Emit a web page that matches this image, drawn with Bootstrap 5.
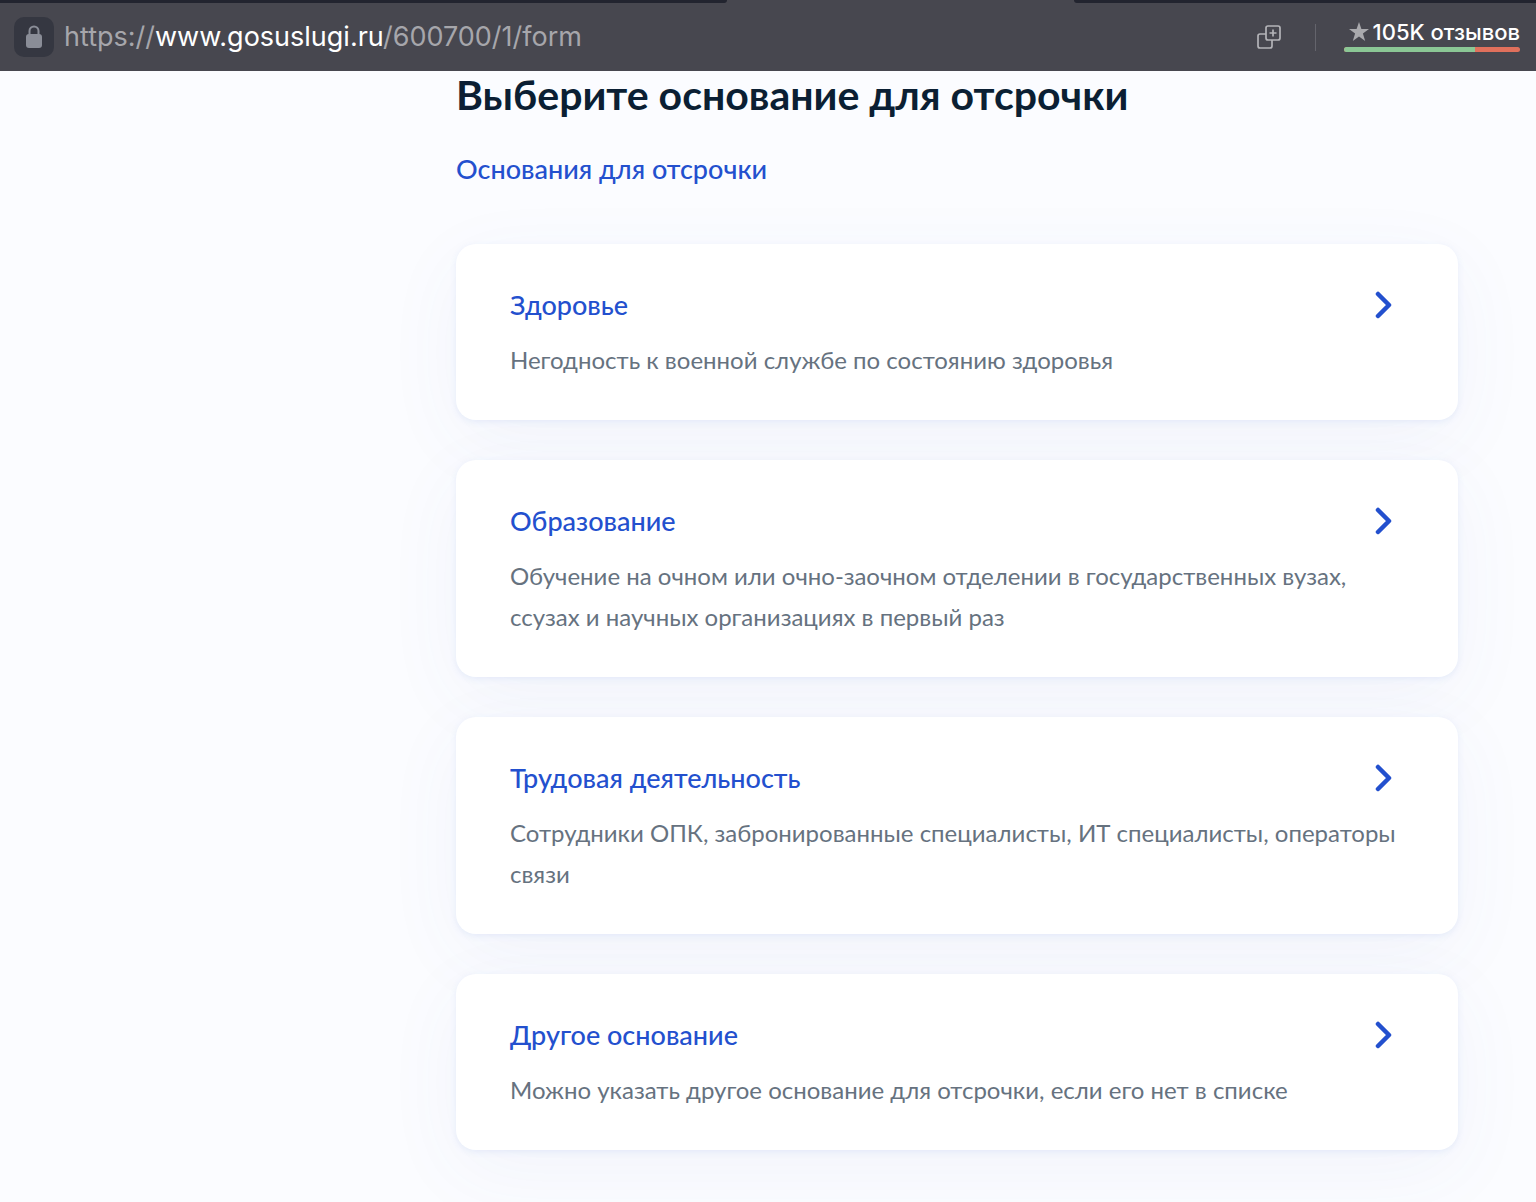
<!DOCTYPE html>
<html lang="ru">
<head>
<meta charset="utf-8">
<meta name="viewport" content="width=device-width, initial-scale=1">
<title>Выберите основание для отсрочки</title>
<link href="https://cdn.jsdelivr.net/npm/bootstrap@5.3.0/dist/css/bootstrap.min.css" rel="stylesheet">
<style>
  body { background: #fbfcff; font-family: Lato, "Open Sans", sans-serif; color: #0b1f33; min-height: 100vh; }
  .browser-bar { background: #47474f; height: 71px; font-family: Inter, Roboto, sans-serif; }
  .tab-edge { background: #22242f; height: 3px; }
  .tab-left { width: 47.3%; border-bottom-right-radius: 4px; }
  .tab-right { width: 30.1%; border-bottom-left-radius: 4px; }
  .bar-row { padding: 0 16px 0 14px; }
  .lock-btn { width: 40px; height: 40px; background: #353741; border-radius: 10px; }
  .address { font-size: 27px; line-height: 32px; color: #a6a6ab; margin-left: 10px; }
  .address b { font-weight: 400; color: #fff; }
  .divider-line { width: 1px; height: 27px; background: #64646c; margin: 0 28px 0 33px; }
  .reviews { width: 176px; color: #fff; font-size: 22px; line-height: 28px; font-weight: 500; padding-bottom: 5px; }
  .rating { height: 5px; border-radius: 3px; background: #e0705c; margin-top: 1px; }
  .rating .progress-bar { background: #8bc795; }
  .form-page { padding: 0 78px 51px 456px; }
  h1 { font-size: 41px; line-height: 48px; font-weight: 700; }
  .blue { color: #2350ce; }
  .item-title, .hint-link { font-size: 27px; line-height: 41px; font-weight: 500; }
  .hint-link { margin-top: 29px; }
  .reason { border-radius: 20px; padding: 40px 54px; color: #66727f; gap: 14px;
    box-shadow: 0 2px 7px rgba(55,100,215,.09), 0 20px 80px rgba(70,100,180,.05); }
  .reason-text { font-size: 24px; line-height: 41px; }
  .reasons { gap: 40px; margin-top: 55px; }
  .chevron { margin-right: 11px; }
  @media (max-width: 1100px) { .form-page { padding-left: 32px; padding-right: 32px; } }
</style>
</head>
<body>
<header class="browser-bar d-flex flex-column">
  <div class="d-flex justify-content-between">
    <div class="tab-edge tab-left"></div><div class="tab-edge tab-right"></div>
  </div>
  <div class="bar-row d-flex align-items-center flex-grow-1">
    <button type="button" class="lock-btn btn border-0 p-0 d-flex align-items-center justify-content-center" aria-label="Сведения о сайте">
      <svg width="18" height="24" viewBox="0 0 18 24"><rect x="1" y="9" width="16" height="14" rx="3" fill="#8a8d97"/><path d="M4.500 10V6a4.500 4.500 0 0 1 9 0v4" fill="none" stroke="#8a8d97" stroke-width="2"/></svg>
    </button>
    <a class="address text-decoration-none" href="#">https://<b>www.gosuslugi.ru</b>/600700/1/form</a>
    <button type="button" class="btn border-0 p-0 ms-auto d-flex" aria-label="Добавить">
      <svg width="26" height="26" viewBox="0 0 26 26" fill="none" stroke="#b4b4b8" stroke-width="1.700"><rect x="10" y="2" width="14" height="14" rx="2"/><path d="M10 10H4a2 2 0 0 0-2 2v10a2 2 0 0 0 2 2h10a2 2 0 0 0 2-2v-6M17 5.500v7M13.500 9h7"/></svg>
    </button>
    <div class="divider-line"></div>
    <a class="reviews text-decoration-none d-block" href="#">
      <span class="d-flex align-items-center justify-content-end"><svg class="me-1" width="20" height="20" viewBox="0 0 20 20"><path fill="#a9a9ad" d="M10 0l2.400 7H20l-6.100 4.600L16.200 19 10 14.500 3.800 19l2.300-7.400L0 7h7.600z"/></svg>105K отзывов</span>
      <span class="rating progress"><span class="progress-bar" style="width:74.500%"></span></span>
    </a>
  </div>
</header>
<main class="form-page">
  <h1 class="mb-0">Выберите основание для отсрочки</h1>
  <a class="hint-link blue text-decoration-none d-inline-block" href="#">Основания для отсрочки</a>
  <div class="reasons d-flex flex-column">
    <a href="#" class="reason d-flex flex-column bg-white text-decoration-none">
      <span class="d-flex justify-content-between align-items-center"><span class="item-title blue">Здоровье</span><svg class="chevron" width="18" height="28" viewBox="0 0 18 28"><path d="M3 3l11 11L3 25" fill="none" stroke="#2350ce" stroke-width="4.500" stroke-linecap="round" stroke-linejoin="round"/></svg></span>
      <span class="reason-text">Негодность к военной службе по состоянию здоровья</span>
    </a>
    <a href="#" class="reason d-flex flex-column bg-white text-decoration-none">
      <span class="d-flex justify-content-between align-items-center"><span class="item-title blue">Образование</span><svg class="chevron" width="18" height="28" viewBox="0 0 18 28"><path d="M3 3l11 11L3 25" fill="none" stroke="#2350ce" stroke-width="4.500" stroke-linecap="round" stroke-linejoin="round"/></svg></span>
      <span class="reason-text">Обучение на очном или очно-заочном отделении в государственных вузах, ссузах и научных организациях в первый раз</span>
    </a>
    <a href="#" class="reason d-flex flex-column bg-white text-decoration-none">
      <span class="d-flex justify-content-between align-items-center"><span class="item-title blue">Трудовая деятельность</span><svg class="chevron" width="18" height="28" viewBox="0 0 18 28"><path d="M3 3l11 11L3 25" fill="none" stroke="#2350ce" stroke-width="4.500" stroke-linecap="round" stroke-linejoin="round"/></svg></span>
      <span class="reason-text">Сотрудники ОПК, забронированные специалисты, ИТ специалисты, операторы связи</span>
    </a>
    <a href="#" class="reason d-flex flex-column bg-white text-decoration-none">
      <span class="d-flex justify-content-between align-items-center"><span class="item-title blue">Другое основание</span><svg class="chevron" width="18" height="28" viewBox="0 0 18 28"><path d="M3 3l11 11L3 25" fill="none" stroke="#2350ce" stroke-width="4.500" stroke-linecap="round" stroke-linejoin="round"/></svg></span>
      <span class="reason-text">Можно указать другое основание для отсрочки, если его нет в списке</span>
    </a>
  </div>
</main>
<script src="https://cdn.jsdelivr.net/npm/bootstrap@5.3.0/dist/js/bootstrap.bundle.min.js"></script>
</body>
</html>
